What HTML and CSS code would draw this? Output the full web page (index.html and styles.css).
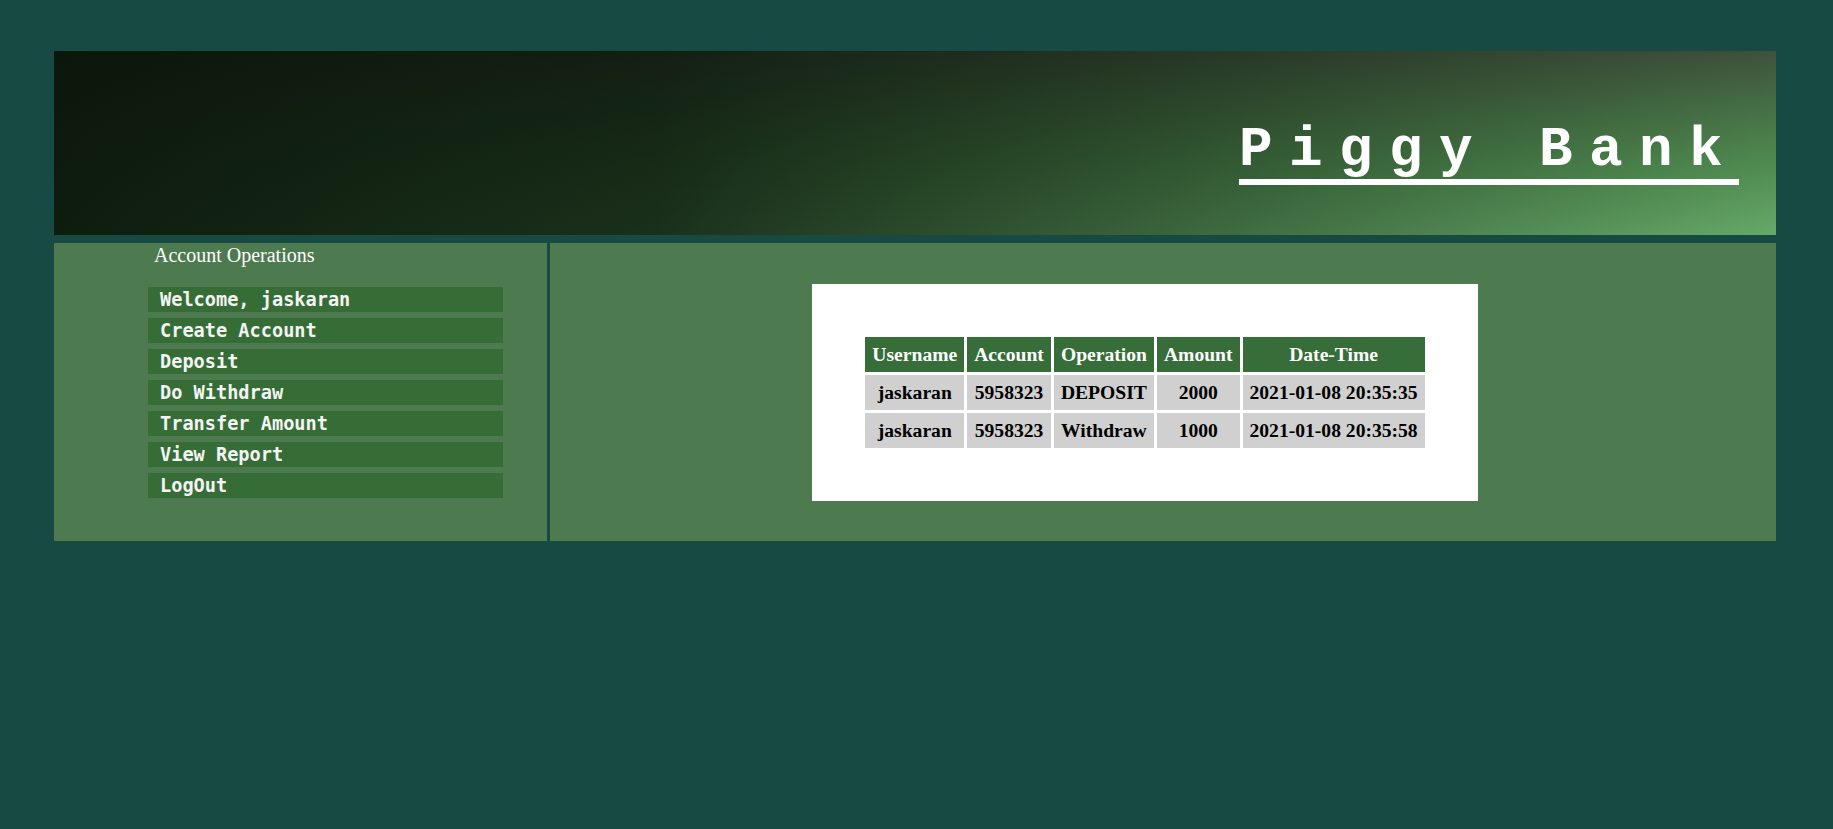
FILE: index.html
```html
<!DOCTYPE html>
<html lang="en">
<head>
<meta charset="utf-8">
<title>Piggy Bank - View Report</title>
<link rel="stylesheet" href="styles.css">
</head>
<body>
<div class="page">
  <header class="banner">
    <h1 class="brand">Piggy Bank</h1>
  </header>
  <div class="content">
    <aside class="sidebar">
      <h3 class="side-title">Account Operations</h3>
      <nav class="menu">
        <a class="menu-item">Welcome, jaskaran</a>
        <a class="menu-item">Create Account</a>
        <a class="menu-item">Deposit</a>
        <a class="menu-item">Do Withdraw</a>
        <a class="menu-item">Transfer Amount</a>
        <a class="menu-item">View Report</a>
        <a class="menu-item">LogOut</a>
      </nav>
    </aside>
    <main class="main">
      <div class="report-card">
        <table class="report">
          <thead>
            <tr><th>Username</th><th>Account</th><th>Operation</th><th>Amount</th><th>Date-Time</th></tr>
          </thead>
          <tbody>
            <tr><td>jaskaran</td><td>5958323</td><td>DEPOSIT</td><td>2000</td><td>2021-01-08 20:35:35</td></tr>
            <tr><td>jaskaran</td><td>5958323</td><td>Withdraw</td><td>1000</td><td>2021-01-08 20:35:58</td></tr>
          </tbody>
        </table>
      </div>
    </main>
  </div>
</div>
</body>
</html>
```
FILE: styles.css
```css
html, body {
  margin: 0;
  padding: 0;
  background: #174a43;
  height: 100%;
}

body {
  font-family: "Liberation Serif", "Times New Roman", serif;
}

.page {
  width: 1722px;
  padding: 51px 0 0 54px;
}

.banner {
  height: 184px;
  box-sizing: border-box;
  padding: 67px 37px 0 0;
  display: flex;
  justify-content: flex-end;
  align-items: flex-start;
  background:
    linear-gradient(to right, rgba(8, 18, 8, 0.93) 0%, rgba(8, 18, 8, 0.8) 35%, rgba(8, 18, 8, 0.45) 65%, rgba(8, 18, 8, 0) 100%),
    linear-gradient(to bottom, #3f523c 0%, #4f8a50 60%, #66a968 100%);
}

.brand {
  margin: 0;
  font-family: "Liberation Mono", "Courier New", monospace;
  font-weight: bold;
  font-size: 56px;
  line-height: normal;
  letter-spacing: 16.4px;
  color: #ffffff;
  text-decoration: underline;
  text-decoration-thickness: 6px;
  text-underline-offset: 14px;
}

.content {
  display: flex;
  gap: 3px;
  margin-top: 8px;
}

.sidebar {
  width: 493px;
  flex: none;
  background: #4e7a50;
  box-sizing: border-box;
  padding: 1px 0 0 94px;
}

.side-title {
  margin: 0 0 20px 6px;
  font-family: "Liberation Serif", "Times New Roman", serif;
  font-weight: normal;
  font-size: 20px;
  line-height: 23px;
  color: #ffffff;
}

.menu {
  display: flex;
  flex-direction: column;
  gap: 6px;
  width: 355px;
}

.menu-item {
  display: block;
  height: 25px;
  line-height: 25px;
  padding-left: 12px;
  background: #366d37;
  color: #f4f4f4;
  font-family: "DejaVu Sans Mono", "Liberation Mono", monospace;
  font-weight: bold;
  font-size: 18.6px;
  text-decoration: none;
  white-space: nowrap;
}

.main {
  flex: 1;
  background: #4e7a50;
  display: flex;
  justify-content: center;
  align-items: flex-start;
  padding: 41px 36px 40px 0;
}

.report-card {
  background: #ffffff;
  padding: 50px;
}

.report {
  border-collapse: separate;
  border-spacing: 3px;
  font-family: "Liberation Serif", "Times New Roman", serif;
  font-weight: bold;
  font-size: 19.6px;
}

.report th,
.report td {
  padding: 6px 7px;
  line-height: 23px;
  text-align: center;
  white-space: nowrap;
}

.report th {
  background: #366d38;
  color: #ffffff;
}

.report td {
  background: #d0d0d0;
  color: #000000;
}
```
